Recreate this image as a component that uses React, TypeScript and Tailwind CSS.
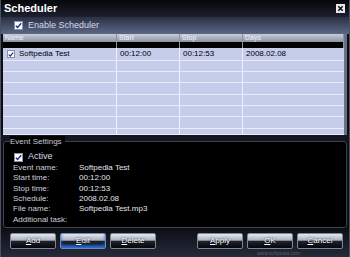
import React from "react";

const cols = [
  { label: "Name", w: "w-[114px]" },
  { label: "Start", w: "w-[63px]" },
  { label: "Stop", w: "w-[63px]" },
  { label: "Days", w: "flex-1" },
];

const rowHeights = ["h-[13px]", "h-[11px]", "h-[11px]", "h-[12px]", "h-[11px]", "h-[11px]", "h-[12px]", "h-[6px]"];

const details = [
  ["Event name:", "Softpedia Test"],
  ["Start time:", "00:12:00"],
  ["Stop time:", "00:12:53"],
  ["Schedule:", "2008.02.08"],
  ["File name:", "Softpedia Test.mp3"],
  ["Additional task:", ""],
];

const Check = ({ className = "" }: { className?: string }) => (
  <span className={`flex items-center justify-center border border-[#8a90a8] bg-white ${className}`}>
    <svg viewBox="0 0 8 8" className="w-[7px] h-[7px]">
      <path d="M1 4.2 L3 6.2 L7 1.5" stroke="#1a2a8a" strokeWidth="1.6" fill="none" />
    </svg>
  </span>
);

const Btn = ({ first, rest, focus }: { first: string; rest: string; focus?: boolean }) => (
  <div
    className={`w-[46px] h-[16px] rounded-[2px] border ${focus ? "border-[#6f86c0]" : "border-[#7d8494]"} bg-[linear-gradient(#e4e8f0_0%,#a9b0c0_45%,#20242e_50%,#05060a_100%)] flex items-center justify-center text-[8px] text-white [text-shadow:0_0_2px_#000] ${focus ? "shadow-[inset_0_-3px_3px_#2a6ad8]" : ""}`}
  >
    <span className="underline">{first}</span>
    {rest}
  </div>
);

export default function App() {
  return (
    <div className="w-[350px] h-[257px] overflow-hidden relative flex flex-col bg-[#0c0e14] border-x border-[#4a5062] font-['Liberation_Sans',Arial,sans-serif]">
      {/* title bar */}
      <div className="h-[17px] flex items-center justify-between px-[3px] bg-[linear-gradient(#06070a,#1c2030)]">
        <span className="text-white font-bold text-[11px]">Scheduler</span>
        <span className="w-[9px] h-[9px] bg-[#e8e8e8] flex items-center justify-center mr-[1px]">
          <svg viewBox="0 0 8 8" className="w-[7px] h-[7px]">
            <path d="M1.5 1.5 L6.5 6.5 M6.5 1.5 L1.5 6.5" stroke="#111" strokeWidth="1.8" />
          </svg>
        </span>
      </div>

      {/* enable strip */}
      <div className="h-[17px] flex items-center gap-[5px] pl-[13px] bg-[linear-gradient(#2a3042,#5c6686)]">
        <Check className="w-[9px] h-[9px]" />
        <span className="text-[9px] text-[#d4d8e6]">Enable Scheduler</span>
      </div>

      {/* table */}
      <div className="mx-[2px] h-[101px] flex flex-col bg-[#c6cdea] border-r-[3px] border-[#6a7086] overflow-hidden">
        <div className="flex h-[15px]">
          {cols.map((c) => (
            <div key={c.label} className={`${c.w} flex flex-col border-r border-[#8a92a6]`}>
              <div className="h-[8px] bg-[linear-gradient(#c8ced8,#8a92a2)] text-[7px] leading-[8px] text-[#eef0f6] pl-[2px]">
                {c.label}
              </div>
              <div className="flex-1 bg-black" />
            </div>
          ))}
        </div>
        {rowHeights.map((h, i) => (
          <div key={i} className={`flex ${h} border-b border-[#e8ecf8] shrink-0`}>
            {cols.map((c, j) => (
              <div
                key={c.label}
                className={`${c.w} ${j < 3 ? "border-r border-[#eef0fa]" : ""} flex items-center text-[8px] text-black`}
              >
                {i === 0 && j === 0 && (
                  <>
                    <Check className="w-[8px] h-[8px] ml-[4px] mr-[4px]" />
                    <span>Softpedia Test</span>
                  </>
                )}
                {i === 0 && j === 1 && <span className="pl-[3px]">00:12:00</span>}
                {i === 0 && j === 2 && <span className="pl-[3px]">00:12:53</span>}
                {i === 0 && j === 3 && <span className="pl-[3px]">2008.02.08</span>}
              </div>
            ))}
          </div>
        ))}
      </div>

      <div className="h-[6px] bg-[#14171f]" />

      {/* event settings */}
      <div className="relative mx-[2px] h-[87px] bg-black rounded-[3px] border border-[#3d4252] pt-[9px]">
        <div className="absolute -top-[6px] left-[6px] flex items-center bg-black pr-[3px] text-[8px] text-[#c4c8d4]">
          Event Settings
        </div>
        <div className="flex items-center gap-[5px] pl-[10px] h-[12px]">
          <Check className="w-[9px] h-[9px]" />
          <span className="text-[9px] text-[#d8dce8]">Active</span>
        </div>
        <div className="flex flex-col pl-[9px]">
          {details.map(([k, v]) => (
            <div key={k} className="flex h-[10.3px] items-center text-[8px] text-[#cdd1dc]">
              <span className="w-[66px]">{k}</span>
              <span className="text-[#e2e5ee]">{v}</span>
            </div>
          ))}
        </div>
      </div>

      {/* buttons */}
      <div className="relative flex-1 flex flex-col pt-[5px] px-[9px] bg-[linear-gradient(#0c0e14,#262b3a)]">
        <div className="flex">
          <div className="flex gap-[4px]">
            <Btn first="A" rest="dd" />
            <Btn first="E" rest="dit" focus />
            <Btn first="D" rest="elete" />
          </div>
          <div className="flex gap-[4px] ml-auto mr-[-3px]">
            <Btn first="A" rest="pply" />
            <Btn first="O" rest="K" />
            <Btn first="C" rest="ancel" />
          </div>
        </div>
        <div className="self-end mr-[40px] text-[5px] leading-[6px] mt-[1px] text-[#ffffff]/25">
          www.softpedia.com
        </div>
      </div>
    </div>
  );
}
